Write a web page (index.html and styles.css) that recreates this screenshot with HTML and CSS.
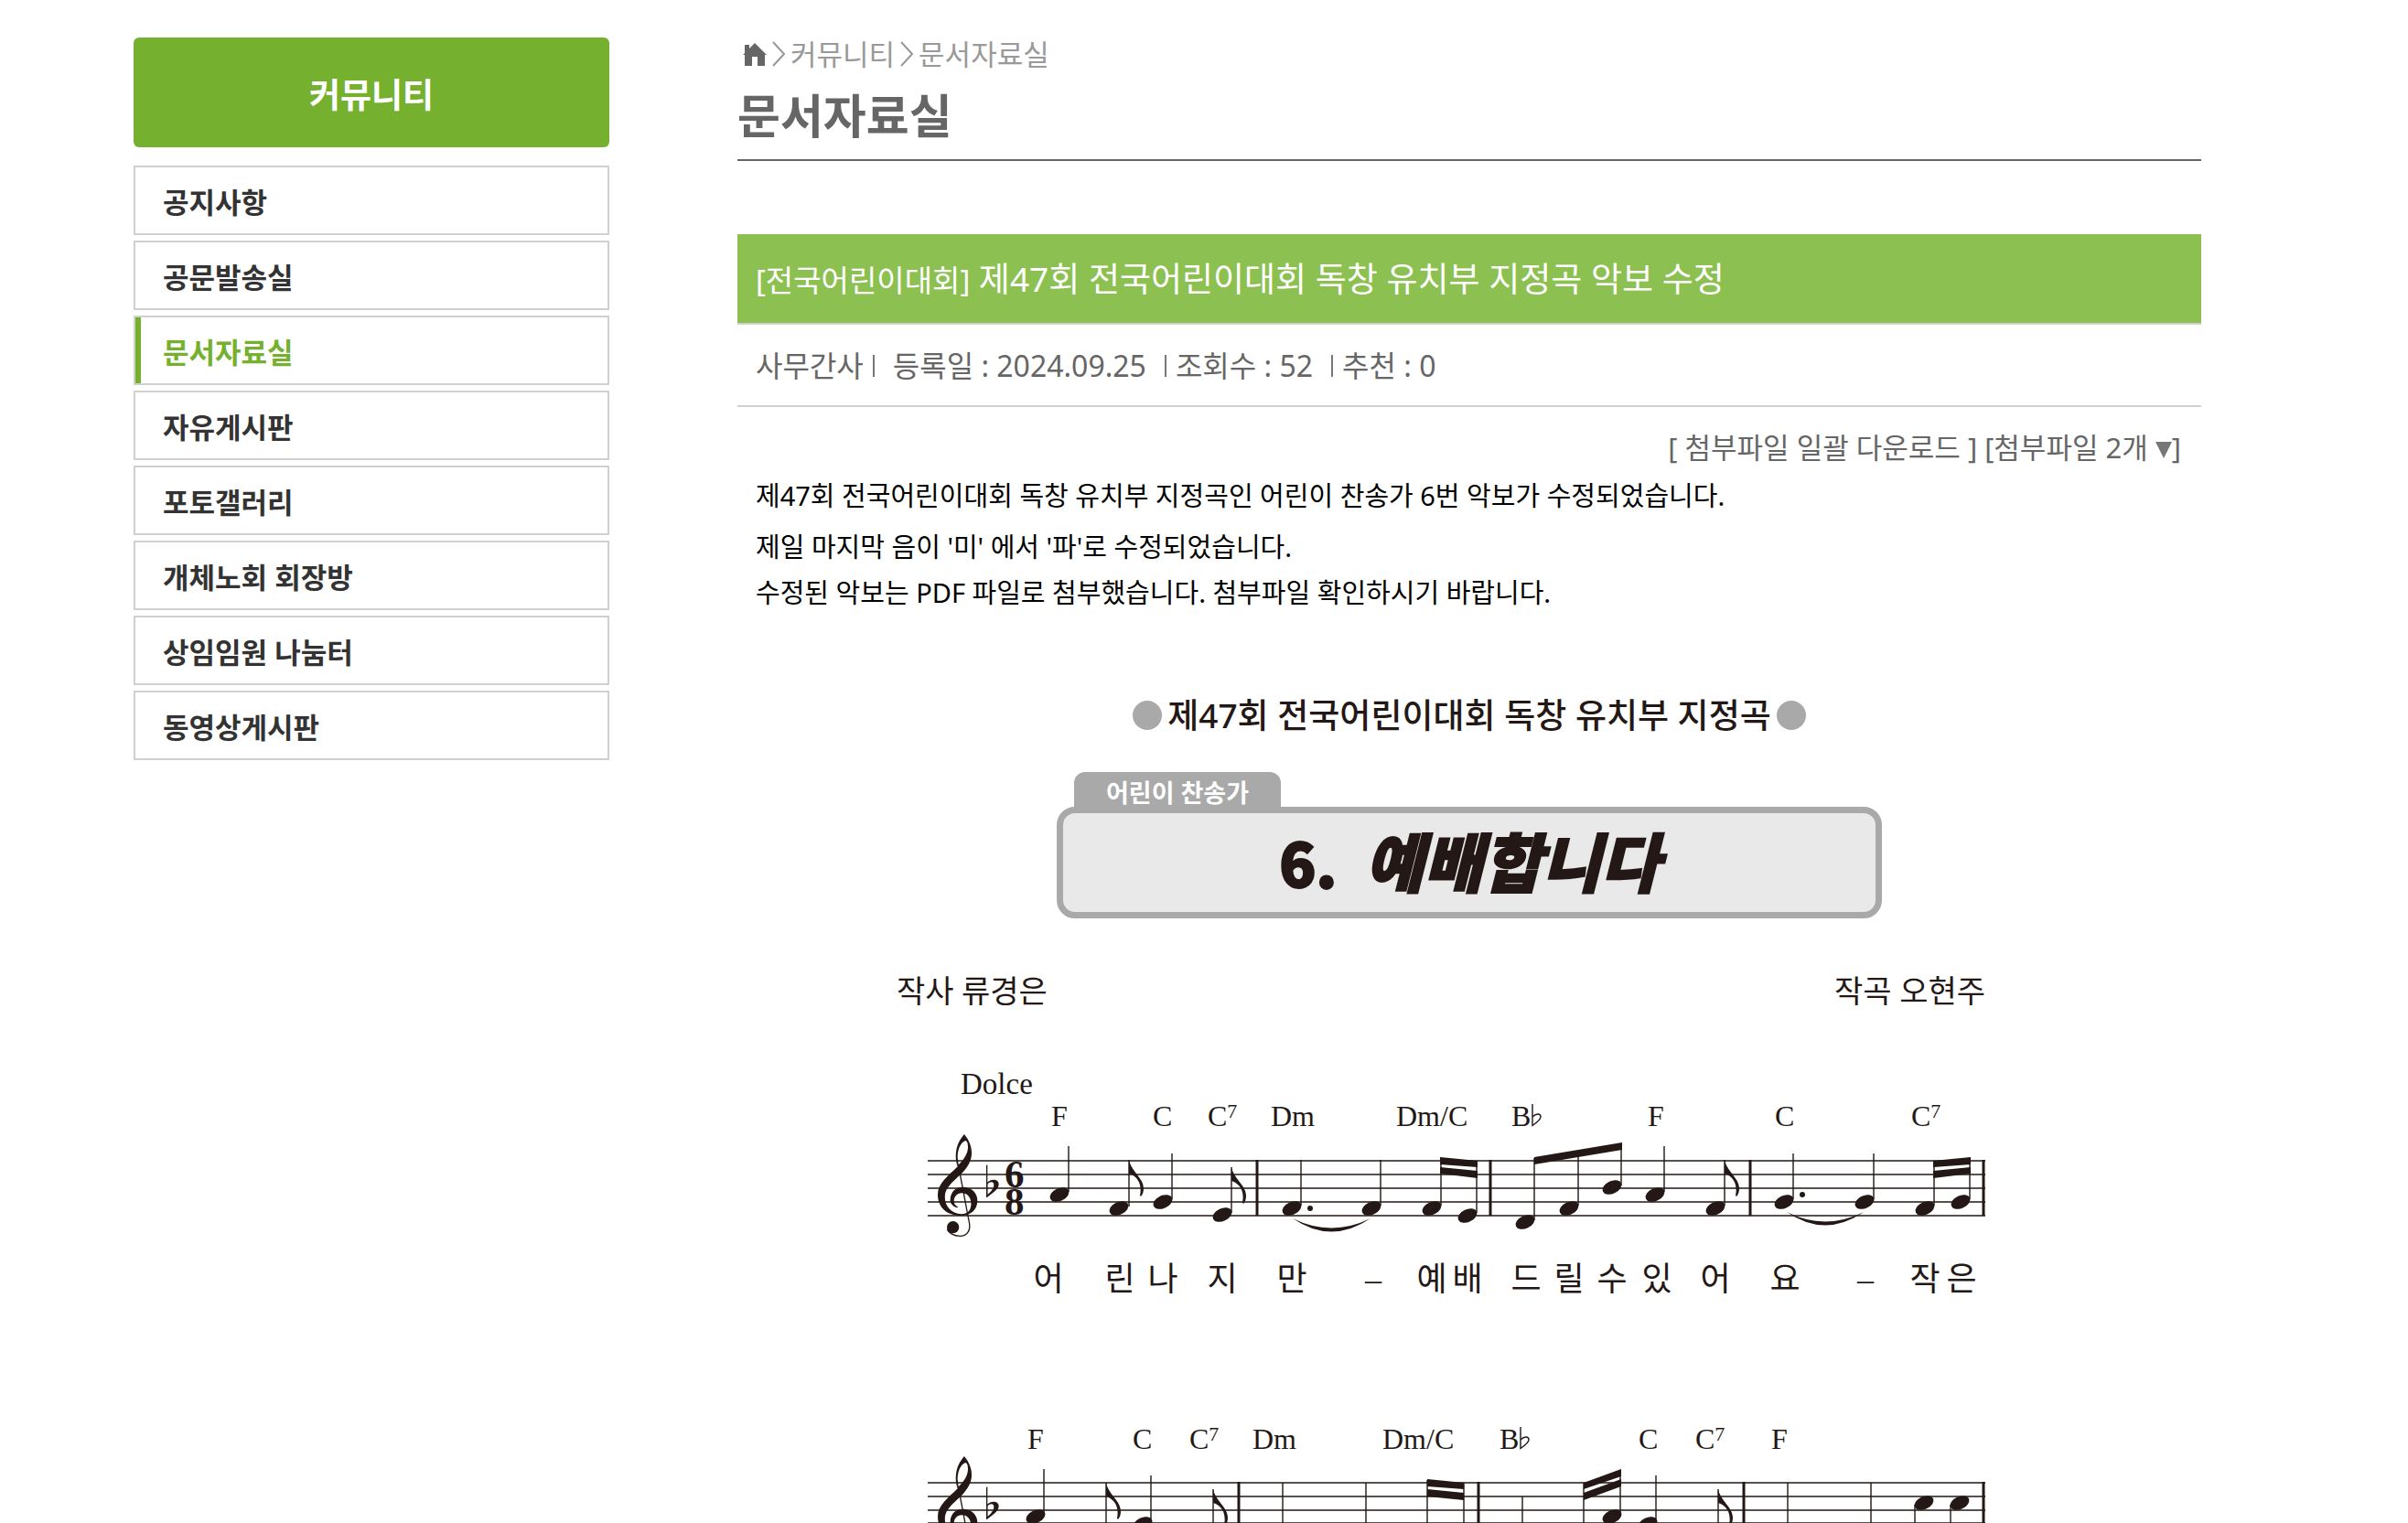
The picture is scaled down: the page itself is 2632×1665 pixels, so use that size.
FILE: index.html
```html
<!DOCTYPE html>
<html lang="ko">
<head>
  <meta charset="UTF-8">
  <title>문서자료실</title>
  <link rel="stylesheet" href="styles.css">
</head>
<body>

<div class="wrap">
  <aside class="side">
    <h2 class="side-title">커뮤니티</h2>
    <ul class="side-menu">
      <li><a href="#">공지사항</a></li>
      <li><a href="#">공문발송실</a></li>
      <li class="on"><a href="#">문서자료실</a></li>
      <li><a href="#">자유게시판</a></li>
      <li><a href="#">포토갤러리</a></li>
      <li><a href="#">개체노회 회장방</a></li>
      <li><a href="#">상임임원 나눔터</a></li>
      <li><a href="#">동영상게시판</a></li>
    </ul>
  </aside>

  <main class="content">
    <nav class="location">
      <a href="#" aria-label="홈"><svg class="home" viewBox="0 0 26 25"><path d="M13 0 26 13H24V25H16V15H10V25H2V13H0L2 11V2H7V6Z"/></svg></a>
      <svg class="arrow" viewBox="0 0 14 28"><path d="M1 1 13 14 1 27"/></svg>
      <a href="#">커뮤니티</a>
      <svg class="arrow" viewBox="0 0 14 28"><path d="M1 1 13 14 1 27"/></svg>
      <a href="#">문서자료실</a>
    </nav>
    <h1 class="page-title">문서자료실</h1>

    <article class="view">
      <h2 class="subject"><span class="cate">[전국어린이대회]</span> 제47회 전국어린이대회 독창 유치부 지정곡 악보 수정</h2>
      <div class="info">
        <span>사무간사</span>
        <span class="bar wide"></span>
        <span>등록일 : 2024.09.25</span>
        <span class="bar left"></span>
        <span>조회수 : 52</span>
        <span class="bar left"></span>
        <span>추천 : 0</span>
      </div>
      <div class="files">
        <a href="#">[ 첨부파일 일괄 다운로드 ]</a>
        <a href="#">[첨부파일 2개 <svg class="down" viewBox="0 0 18 18"><path d="M0 0H18L9 18Z"/></svg>]</a>
      </div>
      <div class="text">
        <p class="first">제47회 전국어린이대회 독창 유치부 지정곡인 어린이 찬송가 6번 악보가 수정되었습니다.</p>
        <p>제일 마지막 음이 '미' 에서 '파'로 수정되었습니다.</p>
        <p>수정된 악보는 PDF 파일로 첨부했습니다. 첨부파일 확인하시기 바랍니다.</p>
      </div>

      <section class="sheet">
        <h3 class="sheet-head"><i></i>제47회 전국어린이대회 독창 유치부 지정곡<i></i></h3>
        <div class="song">
          <span class="song-tab">어린이 찬송가</span>
          <div class="song-title"><span>6.</span> <em>예배합니다</em></div>
        </div>

        <svg class="score" viewBox="806 1030 1600 635">
          <defs>
            <g id="clef">
              <path fill-rule="evenodd" d="M132 24C148 44 157 64 156 88C155 114 142 132 126 150C104 172 78 190 70 216C62 250 84 284 122 286C150 286 156 264 154 246C151 228 140 217 124 217C108 217 98 230 98 243C98 252 102 258 112 263L108 265C94 260 85 250 86 238C87 212 104 197 128 197C156 197 175 216 175 242C175 272 152 291 120 291C76 291 45 264 45 222C45 186 78 162 110 130C104 112 103 98 105 82C108 58 118 40 132 24ZM134 46C118 54 110 76 110 100L113 124C130 108 144 88 144 66C144 52 140 44 134 46Z"/>
              <path class="thin" d="M113 128 149 318C152 342 140 358 118 358C96 358 80 346 76 336"/>
              <circle cx="95" cy="329" r="20"/>
            </g>
            <g id="flat">
              <path class="thin" d="M206 125V230"/>
              <path fill-rule="evenodd" d="M205 184C222 167 245 172 245 188C245 206 220 220 204 232ZM208 188V222C220 212 229 202 229 190C229 179 217 178 208 188Z"/>
            </g>
            <path id="small-flat" class="stem" d="M0 0V23.5C5 20 9 17 9 14C9 10 4 10 0 14"/>
            <ellipse id="head" rx="11" ry="7" transform="rotate(-25)"/>
            <path id="flag" d="M0 0C2 12 16 20 16 31C16 35 15 38 13 40L12 39C14 30 12 19 0 15Z"/>
          </defs>

          <g class="credit">
            <text x="980" y="1096">작사 류경은</text>
            <text x="2170" y="1096" text-anchor="end">작곡 오현주</text>
          </g>
          <text class="dolce" x="1050" y="1196">Dolce</text>

          <!-- 1단 -->
          <g class="chord">
            <text x="1149" y="1231">F</text>
            <text x="1260" y="1231">C</text>
            <text x="1320" y="1231">C<tspan class="sup" dy="-9">7</tspan></text>
            <text x="1389" y="1231">Dm</text>
            <text x="1526" y="1231">Dm/C</text>
            <text x="1652" y="1231">B</text>
            <text x="1801" y="1231">F</text>
            <text x="1940" y="1231">C</text>
            <text x="2089" y="1231">C<tspan class="sup" dy="-9">7</tspan></text>
          </g>
          <use href="#small-flat" x="1675" y="1207"/>
          <path class="line" d="M1014 1269H2170M1014 1284H2170M1014 1299H2170M1014 1314H2170M1014 1329H2170"/>
          <use href="#clef" transform="translate(1010 1232) scale(.3333)"/>
          <use href="#flat" transform="translate(1010 1232) scale(.3333)"/>
          <text class="meter" x="1098" y="1298">6</text>
          <text class="meter" x="1098" y="1328">8</text>
          <path class="barline" d="M1374 1268V1329M1629 1268V1329M1913 1268V1329M2168 1268V1329"/>
          <path class="stem" d="M1168 1253V1303M1234 1268V1319M1281 1261V1311M1346 1276V1326M1422 1268V1318M1509 1268V1318M1575 1266V1318M1614 1269V1326M1677 1266V1334M1725 1260V1318M1772 1251V1296M1819 1253V1303M1885 1268V1318M1960 1261V1311M2048 1261V1311M2114 1269V1318M2153 1266V1311"/>
          <use href="#head" x="0" transform="translate(1158 1306)"/>
          <use href="#head" transform="translate(1223 1321)"/>
          <use href="#head" transform="translate(1271 1314)"/>
          <use href="#head" transform="translate(1336 1328)"/>
          <use href="#head" transform="translate(1412 1321)"/>
          <use href="#head" transform="translate(1499 1321)"/>
          <use href="#head" transform="translate(1565 1321)"/>
          <use href="#head" transform="translate(1604 1329)"/>
          <use href="#head" transform="translate(1667 1336)"/>
          <use href="#head" transform="translate(1715 1321)"/>
          <use href="#head" transform="translate(1762 1298)"/>
          <use href="#head" transform="translate(1809 1306)"/>
          <use href="#head" transform="translate(1875 1321)"/>
          <use href="#head" transform="translate(1950 1314)"/>
          <use href="#head" transform="translate(2038 1314)"/>
          <use href="#head" transform="translate(2104 1321)"/>
          <use href="#head" transform="translate(2143 1314)"/>
          <use href="#flag" x="1234" y="1268"/>
          <use href="#flag" x="1346" y="1276"/>
          <use href="#flag" x="1885" y="1268"/>
          <circle cx="1432" cy="1321" r="3"/>
          <circle cx="1970" cy="1306" r="3"/>
          <path d="M1574 1265 1615 1269V1276L1574 1273ZM1574 1276 1615 1280V1288L1574 1283ZM1677 1265 1773 1249V1257L1677 1273ZM2113 1269 2154 1265V1273L2113 1276ZM2113 1280 2154 1276V1283L2113 1288Z"/>
          <path d="M1413 1332Q1455 1353 1498 1332Q1455 1361 1413 1332ZM1953 1325Q1995 1346 2037 1325Q1995 1354 1953 1325Z"/>
          <g class="lyric">
            <text x="1146" y="1411">어</text>
            <text x="1224" y="1411">린</text>
            <text x="1271" y="1411">나</text>
            <text x="1336" y="1411">지</text>
            <text x="1412" y="1411">만</text>
            <text x="1501" y="1411">–</text>
            <text x="1565" y="1411">예</text>
            <text x="1604" y="1411">배</text>
            <text x="1668" y="1411">드</text>
            <text x="1715" y="1411">릴</text>
            <text x="1762" y="1411">수</text>
            <text x="1811" y="1411">있</text>
            <text x="1875" y="1411">어</text>
            <text x="1951" y="1411">요</text>
            <text x="2039" y="1411">–</text>
            <text x="2104" y="1411">작</text>
            <text x="2144" y="1411">은</text>
          </g>

          <!-- 2단 -->
          <g class="chord">
            <text x="1123" y="1584">F</text>
            <text x="1238" y="1584">C</text>
            <text x="1300" y="1584">C<tspan class="sup" dy="-9">7</tspan></text>
            <text x="1369" y="1584">Dm</text>
            <text x="1511" y="1584">Dm/C</text>
            <text x="1639" y="1584">B</text>
            <text x="1791" y="1584">C</text>
            <text x="1853" y="1584">C<tspan class="sup" dy="-9">7</tspan></text>
            <text x="1936" y="1584">F</text>
          </g>
          <use href="#small-flat" x="1662" y="1560"/>
          <path class="line" d="M1014 1621H2170M1014 1636H2170M1014 1651H2170M1014 1665H2170"/>
          <use href="#clef" transform="translate(1010 1584) scale(.3333)"/>
          <use href="#flat" transform="translate(1010 1584) scale(.3333)"/>
          <path class="barline" d="M1354 1620V1670M1616 1620V1670M1906 1620V1670M2168 1620V1670"/>
          <path class="stem" d="M1141 1606V1656M1209 1621V1670M1258 1613V1664M1326 1628V1670M1402 1621V1670M1493 1621V1670M1560 1618V1670M1600 1621V1670M1664 1636V1670M1731 1621V1670M1771 1607V1656M1810 1613V1664M1878 1628V1670M1954 1621V1670M2045 1621V1670M2093 1645V1670M2132 1645V1670"/>
          <use href="#head" transform="translate(1132 1658)"/>
          <use href="#head" transform="translate(1249 1666)"/>
          <use href="#head" transform="translate(1762 1658)"/>
          <use href="#head" transform="translate(1801 1666)"/>
          <use href="#head" transform="translate(2103 1643)"/>
          <use href="#head" transform="translate(2142 1643)"/>
          <use href="#flag" x="1209" y="1621"/>
          <use href="#flag" x="1326" y="1628"/>
          <use href="#flag" x="1878" y="1628"/>
          <path d="M1560 1617 1600 1621V1628L1560 1625ZM1560 1628 1600 1632V1640L1560 1636ZM1731 1621 1772 1606V1614L1731 1628ZM1731 1632 1772 1617V1625L1731 1640Z"/>
        </svg>
      </section>
    </article>
  </main>
</div>

</body>
</html>
```
FILE: styles.css
```css
* { box-sizing: border-box; margin: 0; padding: 0; }
body { background: #fff; color: #666; font-family: "Noto Sans", "Noto Sans CJK KR", sans-serif; font-size: 31px; }
a { color: inherit; text-decoration: none; }
ul { list-style: none; }

.wrap { display: flex; gap: 140px; padding: 41px 226px 0 146px; }

/* left menu */
.side { flex: 0 0 520px; }
.side-title { height: 120px; line-height: 126px; margin-bottom: 20px; border-radius: 6px; background: #76b02f; color: #fff; font-size: 37px; font-weight: bold; text-align: center; }
.side-menu { display: flex; flex-direction: column; gap: 6px; }
.side-menu li { border: 2px solid #d0d0d0; }
.side-menu a { display: block; height: 72px; line-height: 76px; padding-left: 30px; color: #333; font-weight: bold; }
.side-menu .on a { border-left: 6px solid #76b02f; padding-left: 24px; color: #76b02f; }

.content { flex: 1; min-width: 0; }
.location { display: flex; align-items: center; gap: 6px; height: 36px; line-height: 34px; padding-left: 6px; color: #999; }
.location a { display: block; }
.home { display: block; width: 26px; height: 25px; fill: #666; }
.arrow { width: 14px; height: 28px; fill: none; stroke: #999; stroke-width: 2; }
.page-title { height: 99px; line-height: 98px; border-bottom: 2px solid #666; font-size: 51px; }

/* view */
.view { margin-top: 80px; }
.subject { height: 99px; line-height: 98px; padding: 0 20px; border-bottom: 2px solid #d0d0d0; background: #8cc152; color: #fff; font-size: 37px; font-weight: normal; }
.cate { font-size: 33px; }
.info { display: flex; align-items: center; height: 90px; padding: 0 20px 2px; border-bottom: 2px solid #d0d0d0; font-size: 32px; }
.bar { width: 2px; height: 24px; margin: 4px 10px 0; background: #777; }
.bar.wide { margin-right: 20px; }
.bar.left { margin-left: 20px; }
.files { display: flex; justify-content: flex-end; gap: 8px; height: 72px; line-height: 88px; padding-right: 22px; }
.down { width: 18px; height: 18px; fill: #777; }
.text { padding: 0 20px; color: #000; font-size: 29px; line-height: 50px; }
.text .first { margin-bottom: 6px; }

/* sheet music */
.sheet { margin-top: 84px; color: #231815; }
.sheet-head { display: flex; justify-content: center; align-items: center; gap: 6px; height: 50px; line-height: 48px; font-size: 37px; font-weight: 500; }
.sheet-head i { width: 32px; height: 32px; border-radius: 50%; background: #a9a9a9; }
.song { width: 902px; margin: 37px auto 26px; }
.song-tab { display: block; width: 226px; height: 38px; line-height: 46px; margin-left: 19px; border-radius: 12px 12px 0 0; background: #a9a9a9; color: #fff; font-size: 27px; font-weight: bold; text-align: center; }
.song-title { height: 122px; line-height: 104px; border: 7px solid #a9a9a9; border-radius: 20px; background: #e9e9e9; font-size: 70px; font-weight: 900; text-align: center; -webkit-text-stroke: 2px #231815; }
.song-title span { margin-right: 12px; font-family: "Noto Sans CJK KR", sans-serif; font-size: 66px; }
.score { display: block; width: 100%; fill: #231815; font-family: "Liberation Serif", "Noto Sans CJK KR", serif; }
.line { fill: none; stroke: #231815; stroke-width: 1.4; }
.stem { fill: none; stroke: #231815; stroke-width: 1.4; }
.barline { fill: none; stroke: #231815; stroke-width: 3; }
.thin { fill: none; stroke: #231815; stroke-width: 4; }
.credit { font-size: 34px; }
.dolce { font-size: 33px; }
.chord { font-size: 32px; }
.sup { font-size: 22px; }
.meter { font-size: 43px; font-weight: bold; }
.lyric { font-size: 36px; text-anchor: middle; }
```
